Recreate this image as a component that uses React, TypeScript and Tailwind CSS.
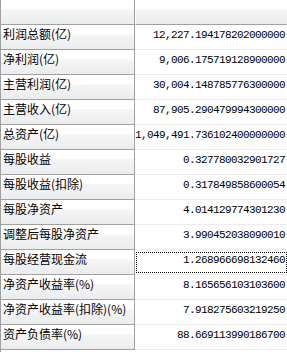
const rows: [string, string][] = [
  ["利润总额(亿)", "12,227.194178202000000"],
  ["净利润(亿)", "9,006.175719128900000"],
  ["主营利润(亿)", "30,004.148785776300000"],
  ["主营收入(亿)", "87,905.290479994300000"],
  ["总资产(亿)", "1,049,491.736102400000000"],
  ["每股收益", "0.327780032901727"],
  ["每股收益(扣除)", "0.317849858600054"],
  ["每股净资产", "4.014129774301230"],
  ["调整后每股净资产", "3.990452038090010"],
  ["每股经营现金流", "1.268966698132460"],
  ["净资产收益率(%)", "8.165656103103600"],
  ["净资产收益率(扣除)(%)", "7.918275603219250"],
  ["资产负债率(%)", "88.669113990186700"],
];

const headBg =
  "bg-[linear-gradient(to_bottom,#ffffff_0%,#ffffff_38%,#f4f5f6_40%,#ebecee_100%)]";

export default function App() {
  const focused = 9;

  return (
    <div className="h-[352px] w-[287px] overflow-hidden bg-white border-l border-[#a0a0a0]">
      <div className="grid grid-cols-[134px_1fr]">
        <div className={`h-[25px] border-r border-b border-[#a0a0a0] ${headBg}`} />
        <div className={`h-[25px] border-b border-l border-[#a0a0a0] border-l-white ${headBg}`} />

        {rows.map(([label, value], i) => (
          <div key={label} className="contents">
            <div
              className={`h-[25px] border-r border-b border-[#a0a0a0] pl-[2px] pt-[3px] text-[12px] leading-[12px] text-black whitespace-nowrap overflow-hidden ${headBg}`}
              style={{ fontFamily: '"Noto Sans CJK SC", "Liberation Sans", sans-serif' }}
            >
              {label}
            </div>
            <div className="relative h-[25px] border-b border-[#ececec] pr-[2px] pt-[3px] text-right text-[11px] leading-[12px] tracking-[-0.6px] text-black whitespace-nowrap">
              <span style={{ fontFamily: '"Liberation Mono", monospace' }}>{value}</span>
              {i === focused && (
                <span className="absolute left-[1px] right-0 top-[2px] bottom-[1px] border border-dotted border-black" />
              )}
            </div>
          </div>
        ))}
      </div>
    </div>
  );
}
